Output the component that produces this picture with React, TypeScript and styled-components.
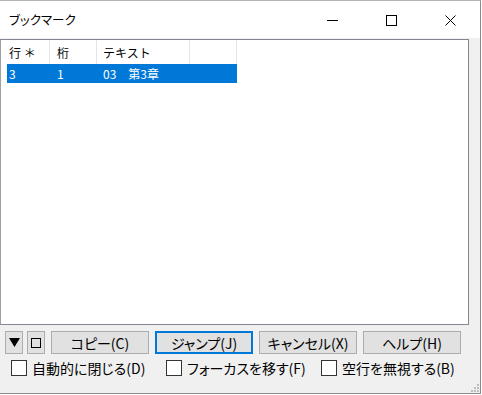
import React from "react";
import styled, { createGlobalStyle } from "styled-components";

const GlobalStyle = createGlobalStyle`
  html, body {
    margin: 0;
    padding: 0;
    background: #ffffff;
  }
  body {
    font-family: "Noto Sans CJK JP", "Noto Sans", sans-serif;
    color: #000;
  }
  * {
    box-sizing: border-box;
  }
`;

interface Column {
  label: string;
  width: number;
  pad: number;
}

const columns: Column[] = [
  { label: "行 ＊", width: 43, pad: 2 },
  { label: "桁", width: 47, pad: 7 },
  { label: "テキスト", width: 93, pad: 6 },
  { label: "", width: 47, pad: 6 },
];

const rows = [["3", "1", "03　第3章", ""]];

const buttons = [
  { label: "コピー(C)", focused: false },
  { label: "ジャンプ(J)", focused: true },
  { label: "キャンセル(X)", focused: false },
  { label: "ヘルプ(H)", focused: false },
];

const options = ["自動的に閉じる(D)", "フォーカスを移す(F)", "空行を無視する(B)"];

export default function App() {
  return (
    <>
      <GlobalStyle />
      <Window>
        <TitleBar>
          <Title>ブックマーク</Title>
          <Caption>
            <CaptionButton aria-label="最小化">
              <svg width="11" height="11" viewBox="0 0 11 11">
                <line x1="0" y1="5.5" x2="11" y2="5.5" stroke="#000" strokeWidth="1" />
              </svg>
            </CaptionButton>
            <CaptionButton aria-label="最大化">
              <svg width="11" height="11" viewBox="0 0 11 11">
                <rect x="0.5" y="0.5" width="10" height="10" fill="none" stroke="#000" strokeWidth="1" />
              </svg>
            </CaptionButton>
            <CaptionButton aria-label="閉じる">
              <svg width="11" height="11" viewBox="0 0 11 11">
                <path d="M0.5 0.5 L10.5 10.5 M10.5 0.5 L0.5 10.5" stroke="#000" strokeWidth="1" />
              </svg>
            </CaptionButton>
          </Caption>
        </TitleBar>

        <Client>
          <ListView>
            <HeaderRow>
              {columns.map((c, i) => (
                <HeaderCell key={i} $width={c.width} $pad={c.pad}>
                  {c.label}
                </HeaderCell>
              ))}
            </HeaderRow>
            {rows.map((r, ri) => (
              <ItemRow key={ri} $selected>
                {r.map((v, ci) => (
                  <ItemCell key={ci} $width={columns[ci].width} $pad={columns[ci].pad}>
                    {v}
                  </ItemCell>
                ))}
              </ItemRow>
            ))}
          </ListView>

          <ButtonRow>
            <SmallButton aria-label="メニュー">
              <svg width="11" height="9" viewBox="0 0 11 9">
                <polygon points="0,0 11,0 5.5,9" fill="#000" />
              </svg>
            </SmallButton>
            <SmallButton aria-label="表示">
              <svg width="10" height="10" viewBox="0 0 10 10">
                <rect x="0.5" y="0.5" width="9" height="9" fill="none" stroke="#000" strokeWidth="1" />
              </svg>
            </SmallButton>
            <ActionGroup>
              {buttons.map((b) => (
                <ActionButton key={b.label} $focused={b.focused}>
                  {b.label}
                </ActionButton>
              ))}
            </ActionGroup>
          </ButtonRow>

          <OptionRow>
            {options.map((o) => (
              <OptionItem key={o}>
                <CheckBox />
                <OptionLabel>{o}</OptionLabel>
              </OptionItem>
            ))}
          </OptionRow>

          <SizeGrip width="12" height="12" viewBox="0 0 12 12">
            {[0, 1, 2].map((r) =>
              [0, 1, 2]
                .filter((c) => c >= 2 - r)
                .map((c) => (
                  <rect key={`${r}-${c}`} x={c * 3 + 3} y={r * 3 + 3} width="2" height="2" fill="#bdbdbd" />
                ))
            )}
          </SizeGrip>
        </Client>
      </Window>
    </>
  );
}

const Window = styled.div`
  width: 481px;
  height: 394px;
  display: flex;
  flex-direction: column;
  border-top: 1px solid #b4b4b4;
  border-right: 1px solid #8a8a8a;
  border-bottom: 1px solid #8a8a8a;
  background: #f0f0f0;
`;

const TitleBar = styled.div`
  height: 37px;
  display: flex;
  align-items: center;
  justify-content: space-between;
  background: #ffffff;
  padding-left: 9px;
`;

const Title = styled.span`
  font-size: 12.5px;
  font-feature-settings: "palt";
  color: #000;
  margin-top: -1px;
`;

const Caption = styled.div`
  display: flex;
  height: 100%;
`;

const CaptionButton = styled.div`
  width: 59px;
  height: 100%;
  display: flex;
  align-items: center;
  justify-content: center;
  padding-top: 1px;
  svg {
    display: block;
  }
`;

const Client = styled.div`
  position: relative;
  flex: 1;
  display: flex;
  flex-direction: column;
  padding: 1px 11px 0 0;
`;

const ListView = styled.div`
  height: 286px;
  border: 1px solid #828790;
  border-left-color: #a0a0a0;
  background: #ffffff;
  padding-left: 6px;
  font-size: 12px;
`;

const HeaderRow = styled.div`
  display: flex;
  height: 24px;
`;

const HeaderCell = styled.div<{ $width: number; $pad: number }>`
  width: ${({ $width }) => $width}px;
  padding-left: ${({ $pad }) => $pad}px;
  border-right: 1px solid #e5e5e5;
  display: flex;
  align-items: center;
  color: #000;
  white-space: pre;
`;

const ItemRow = styled.div<{ $selected?: boolean }>`
  display: flex;
  width: 230px;
  height: 19px;
  background: ${({ $selected }) => ($selected ? "#0078d7" : "transparent")};
  color: ${({ $selected }) => ($selected ? "#ffffff" : "#000000")};
`;

const ItemCell = styled.div<{ $width: number; $pad: number }>`
  width: ${({ $width }) => $width}px;
  padding-left: ${({ $pad }) => $pad}px;
  display: flex;
  align-items: center;
  white-space: pre;
`;

const ButtonRow = styled.div`
  display: flex;
  align-items: center;
  margin-top: 6px;
  padding-left: 5px;
  gap: 4px;
`;

const BaseButton = styled.div`
  height: 23px;
  display: flex;
  align-items: center;
  justify-content: center;
  background: #e1e1e1;
  border: 1px solid #adadad;
  font-size: 14px;
  font-feature-settings: "palt";
  color: #000;
`;

const SmallButton = styled(BaseButton)`
  width: 18px;
  svg {
    display: block;
  }
`;

const ActionGroup = styled.div`
  display: flex;
  gap: 6px;
  margin-left: 2px;
`;

const ActionButton = styled(BaseButton)<{ $focused?: boolean }>`
  width: 98px;
  border: ${({ $focused }) => ($focused ? "2px solid #0078d7" : "1px solid #adadad")};
`;

const OptionRow = styled.div`
  display: grid;
  grid-template-columns: repeat(3, 155px);
  margin-top: 6px;
  padding-left: 11px;
`;

const OptionItem = styled.label`
  display: flex;
  align-items: center;
  gap: 5px;
  height: 16px;
`;

const CheckBox = styled.span`
  width: 16px;
  height: 16px;
  flex: none;
  border: 1px solid #333333;
  background: #ffffff;
`;

const OptionLabel = styled.span`
  font-size: 14px;
  line-height: 16px;
  font-feature-settings: "palt";
  white-space: nowrap;
  color: #000;
`;

const SizeGrip = styled.svg`
  position: absolute;
  right: 0;
  bottom: 0;
`;
